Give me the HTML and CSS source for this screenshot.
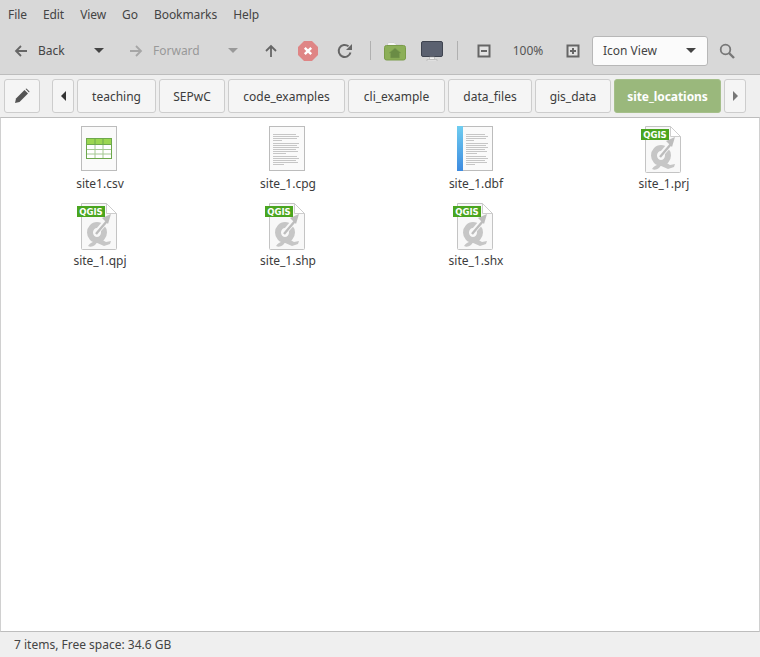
FILE: index.html
```html
<!DOCTYPE html>
<html lang="en">
<head>
<meta charset="utf-8">
<title>site_locations</title>
<link rel="stylesheet" href="styles.css">
</head>
<body>
<svg class="defs" width="0" height="0" aria-hidden="true">
  <defs>
    <linearGradient id="blueband" x1="0" y1="0" x2="0" y2="1">
      <stop offset="0" stop-color="#6fcdf0"/>
      <stop offset="1" stop-color="#3d8be0"/>
    </linearGradient>
    <symbol id="doclines" viewBox="0 0 48 48">
      <path d="M10 8.500h23M10 10.500h26M10 12.500h24M10 14.500h9M10 17.500h26M10 19.500h24M10 21.500h26M10 23.500h23M10 25.500h25M10 27.500h13M10 30.500h24M10 32.500h26M10 34.500h23M10 36.500h25M10 38.500h11" stroke="#c6c6c6" stroke-width="1" fill="none"/>
    </symbol>
    <symbol id="doclines-narrow" viewBox="0 0 48 48">
      <path d="M15 8.500h19M15 10.500h22M15 12.500h20M15 14.500h8M15 17.500h22M15 19.500h20M15 21.500h22M15 23.500h19M15 25.500h21M15 27.500h11M15 30.500h20M15 32.500h22M15 34.500h19M15 36.500h21M15 38.500h9" stroke="#c6c6c6" stroke-width="1" fill="none"/>
    </symbol>
    <symbol id="qgis" viewBox="0 0 48 48">
      <path d="M6.500.5H31.500l10 10V45.500a1 1 0 0 1-1 1H7.500a1 1 0 0 1-1-1Z" fill="#f8f8f8" stroke="#c4c4c4"/>
      <path d="M31.500 .5V10.500H41.500Z" fill="#fff" stroke="#cdcdcd"/>
      <ellipse cx="22" cy="29.500" rx="7" ry="7.500" fill="none" stroke="#c6c6c6" stroke-width="6"/>
      <path d="M24 35l7 4 5-1-1 3-6 2-9-4ZM13 43c2-3 5-5 9-4-1 3-5 6-9 4Z" fill="#c6c6c6"/>
      <path d="M21 30 33 16" stroke="#f8f8f8" stroke-width="5" fill="none"/>
      <path d="M21 31 32 18" stroke="#bdbdbd" stroke-width="2.400" fill="none"/>
      <path d="M36 11l-9 4 6 6Z" fill="#bdbdbd"/>
      <rect x="2" y="3" width="28" height="11" fill="#4aa51f"/>
      <text x="16" y="12" class="qgis-text">QGIS</text>
    </symbol>
  </defs>
</svg>
<div class="window">
  <nav class="menubar">
    <span class="menu-item">File</span>
    <span class="menu-item">Edit</span>
    <span class="menu-item">View</span>
    <span class="menu-item">Go</span>
    <span class="menu-item">Bookmarks</span>
    <span class="menu-item">Help</span>
  </nav>

  <div class="toolbar">
    <div class="tool-nav tool-back">
      <svg class="ic14" viewBox="0 0 14 14"><path d="M13 7H2M7 2 2 7l5 5" fill="none" stroke="#666" stroke-width="1.800"/></svg>
      <span class="tool-label">Back</span>
      <span class="caret"></span>
    </div>
    <div class="tool-nav tool-forward">
      <svg class="ic14" viewBox="0 0 14 14"><path d="M1 7h11M7 2l5 5-5 5" fill="none" stroke="#a6a6a6" stroke-width="1.800"/></svg>
      <span class="tool-label is-disabled">Forward</span>
      <span class="caret is-disabled-caret"></span>
    </div>
    <div class="tool-btn tool-first">
      <svg class="ic14" viewBox="0 0 14 14"><path d="M7 13V2M2 7l5-5 5 5" fill="none" stroke="#666" stroke-width="1.800"/></svg>
    </div>
    <div class="tool-btn">
      <svg class="ic20" viewBox="0 0 20 20"><path d="M6 0h8l6 6v8l-6 6H6l-6-6V6Z" fill="#df8585"/><path d="M6.800 6.800l6.400 6.400M13.200 6.800l-6.400 6.400" stroke="#fff" stroke-width="2.400"/></svg>
    </div>
    <div class="tool-btn">
      <svg class="ic16" viewBox="0 0 16 16"><path d="M13.500 9.500A6 6 0 1 1 11.500 3.300" fill="none" stroke="#666" stroke-width="2"/><path d="M15 1v6H9Z" fill="#666"/></svg>
    </div>
    <span class="sep sep-a"></span>
    <div class="tool-btn">
      <svg class="ic22" viewBox="0 0 22 20"><path d="M3.500 5V2.500L5 1.500h5L12 3.500h6V5Z" fill="#f6f6f6" stroke="#c4c4c4" stroke-width=".6"/><rect x=".5" y="4.500" width="21" height="14.500" rx="2" fill="#8caf58" stroke="#7b9c4a"/><path d="M11 7l6 5h-1.500v5h-9v-5H5Z" fill="#6a8c45" stroke="#7d9f52" stroke-width=".6"/></svg>
    </div>
    <div class="tool-btn">
      <svg class="ic22" viewBox="0 0 22 20"><rect x=".5" y=".5" width="21" height="15" rx="1.500" fill="#5b6170" stroke="#3f4450"/><path d="M8.500 16h5v2.500h-5Z" fill="#f4f4f4" stroke="#aaa" stroke-width=".6"/><path d="M6 18.500h10V20H6Z" fill="#f8f8f8" stroke="#aaa" stroke-width=".6"/></svg>
    </div>
    <span class="sep sep-b"></span>
    <div class="tool-btn">
      <svg class="ic14" viewBox="0 0 14 14"><rect x="1.500" y="1.500" width="11" height="11" fill="#e3e3e3" stroke="#666" stroke-width="2"/><path d="M4 7h6" stroke="#666" stroke-width="2"/></svg>
    </div>
    <span class="zoom-level">100%</span>
    <div class="tool-btn">
      <svg class="ic14" viewBox="0 0 14 14"><rect x="1.500" y="1.500" width="11" height="11" fill="#e3e3e3" stroke="#666" stroke-width="2"/><path d="M4 7h6M7 4v6" stroke="#666" stroke-width="2"/></svg>
    </div>
    <div class="view-combo">
      <span>Icon View</span>
      <span class="caret"></span>
    </div>
    <div class="tool-search">
      <svg class="ic16" viewBox="0 0 16 16"><circle cx="6.500" cy="6.500" r="4.800" fill="none" stroke="#777" stroke-width="1.800"/><path d="M10 10l5 5" stroke="#777" stroke-width="2.400"/></svg>
    </div>
  </div>

  <div class="pathbar">
    <div class="edit-btn">
      <svg class="ic16" viewBox="0 0 16 16"><path d="M1 15l1-4.500L10.500 2l3.500 3.500L5.500 14Z" fill="#555"/><path d="M11.500 1l1-.5 3 3-.5 1Z" fill="#555"/></svg>
    </div>
    <div class="crumbs">
      <div class="crumb"><span class="tri tri-left"></span></div>
      <div class="crumb">teaching</div>
      <div class="crumb">SEPwC</div>
      <div class="crumb">code_examples</div>
      <div class="crumb">cli_example</div>
      <div class="crumb">data_files</div>
      <div class="crumb">gis_data</div>
      <div class="crumb is-current">site_locations</div>
      <div class="crumb"><span class="tri tri-right"></span></div>
    </div>
  </div>

  <main class="files">
    <div class="file">
      <svg class="file-icon" viewBox="1 0 48 48">
        <rect x="6.500" y=".5" width="35" height="44" fill="#fafafa" stroke="#bcbcbc"/>
        <rect x="11.500" y="12.500" width="25" height="20" fill="#fff" stroke="#6da84c"/>
        <rect x="12" y="13" width="24" height="5" fill="#9bd650"/>
        <path d="M12 23.500h24M12 28h24M20 18v14M28 18v14" stroke="#a4c892" fill="none"/>
        <path d="M20 13v5M28 13v5M12 18.500h24" stroke="#6da84c" fill="none"/>
      </svg>
      <span class="file-name">site1.csv</span>
    </div>
    <div class="file">
      <svg class="file-icon" viewBox="1 0 48 48">
        <rect x="6.500" y=".5" width="35" height="44" fill="#fafafa" stroke="#bcbcbc"/>
        <use href="#doclines" width="48" height="48"/>
      </svg>
      <span class="file-name">site_1.cpg</span>
    </div>
    <div class="file">
      <svg class="file-icon" viewBox="1 0 48 48">
        <rect x="6.500" y=".5" width="35" height="44" fill="#fafafa" stroke="#bcbcbc"/>
        <rect x="6" y="0" width="6" height="45" fill="url(#blueband)"/>
        <use href="#doclines-narrow" width="48" height="48"/>
      </svg>
      <span class="file-name">site_1.dbf</span>
    </div>
    <div class="file">
      <svg class="file-icon" viewBox="1 0 48 48"><use href="#qgis" width="48" height="48"/></svg>
      <span class="file-name">site_1.prj</span>
    </div>
    <div class="file">
      <svg class="file-icon" viewBox="1 0 48 48"><use href="#qgis" width="48" height="48"/></svg>
      <span class="file-name">site_1.qpj</span>
    </div>
    <div class="file">
      <svg class="file-icon" viewBox="1 0 48 48"><use href="#qgis" width="48" height="48"/></svg>
      <span class="file-name">site_1.shp</span>
    </div>
    <div class="file">
      <svg class="file-icon" viewBox="1 0 48 48"><use href="#qgis" width="48" height="48"/></svg>
      <span class="file-name">site_1.shx</span>
    </div>
  </main>

  <footer class="statusbar">7 items, Free space: 34.6 GB</footer>
</div>
</body>
</html>
```

FILE: styles.css
```css
* { box-sizing: border-box; }

html, body {
  margin: 0;
  height: 100%;
}

body {
  font-family: "Noto Sans", sans-serif;
  font-size: 12px;
  color: #3c3c3c;
  background: #efefef;
}

.defs { position: absolute; }

.window {
  display: flex;
  flex-direction: column;
  height: 100vh;
  overflow: hidden;
}

/* Menu bar */
.menubar {
  display: flex;
  align-items: center;
  height: 29px;
  background: #d8d8d8;
  flex: none;
  letter-spacing: -0.07px;
}

.menu-item {
  padding: 0 8px;
  color: #444;
}

/* Toolbar */
.toolbar {
  display: flex;
  align-items: center;
  height: 46px;
  padding: 0 0 2px 6px;
  background: #d8d8d8;
  border-bottom: 1px solid #bdbdbd;
  flex: none;
  color: #444;
}

.tool-nav {
  display: flex;
  align-items: center;
  height: 30px;
}

.tool-back {
  width: 112px;
  padding: 0 14px 0 8px;
}

.tool-forward {
  width: 128px;
  padding: 0 8px 0 11px;
}

.tool-label {
  margin-left: 10px;
  margin-right: auto;
}

.tool-label.is-disabled { color: #999; }

.caret {
  width: 0;
  height: 0;
  border-left: 5px solid transparent;
  border-right: 5px solid transparent;
  border-top: 5px solid #444;
  flex: none;
}

.caret.is-disabled-caret { border-top-color: #999; }

.tool-btn {
  display: flex;
  align-items: center;
  justify-content: center;
  width: 37px;
  height: 30px;
  flex: none;
}

.tool-first { margin-left: 6px; }

.ic14 { width: 14px; height: 14px; }
.ic16 { width: 16px; height: 16px; }
.ic20 { width: 20px; height: 20px; }
.ic22 { width: 22px; height: 20px; }

.sep {
  width: 1px;
  height: 19px;
  background: #b0b0b0;
  flex: none;
}

.sep-a { margin: 0 5px 0 7px; }
.sep-b { margin: 0 7px; }

.zoom-level {
  width: 52px;
  text-align: center;
  color: #555;
}

.view-combo {
  display: flex;
  align-items: center;
  justify-content: space-between;
  width: 116px;
  height: 30px;
  margin-left: 1px;
  padding: 0 11px 0 10px;
  background: #fbfbfb;
  border: 1px solid #b7b7b7;
  border-radius: 3px;
}

.tool-search {
  display: flex;
  align-items: center;
  justify-content: center;
  width: 38px;
  height: 30px;
}

/* Path bar */
.pathbar {
  display: flex;
  align-items: center;
  height: 42px;
  padding: 0 4px;
  background: #efefef;
  flex: none;
}

.edit-btn {
  display: flex;
  align-items: center;
  justify-content: center;
  width: 36px;
  height: 34px;
  background: #f5f5f5;
  border: 1px solid #cdcdcd;
  border-radius: 3px;
  flex: none;
}

.crumbs {
  display: grid;
  grid-template-columns: 22px 79px 66px 117px 97px 84px 76px 107px 22px;
  gap: 3px;
  margin-left: 12px;
}

.crumb {
  display: flex;
  align-items: center;
  justify-content: center;
  height: 34px;
  background: #f5f5f5;
  border: 1px solid #cdcdcd;
  border-radius: 3px;
  color: #3c3c3c;
  white-space: nowrap;
}

.crumb.is-current {
  background: #9ab87c;
  border-color: #a5bf8a;
  color: #fff;
  font-weight: 700;
  letter-spacing: -0.07px;
}

.tri {
  width: 0;
  height: 0;
  border-top: 5px solid transparent;
  border-bottom: 5px solid transparent;
}

.tri-left { border-right: 5px solid #333; }
.tri-right { border-left: 5px solid #777; }

/* File grid */
.files {
  flex: 1;
  display: grid;
  grid-template-columns: repeat(4, 188px);
  grid-auto-rows: 77px;
  align-content: start;
  padding: 8px 0 0 5px;
  background: #fff;
  border: 1px solid #bdbdbd;
  border-left-color: #d0d0d0;
  border-right-color: #d0d0d0;
  min-height: 0;
}

.file {
  display: flex;
  flex-direction: column;
  align-items: center;
}

.file-icon {
  display: block;
  width: 48px;
  height: 48px;
  flex: none;
}

.file-name {
  line-height: 17px;
  margin-top: 1px;
  color: #3c3c3c;
  white-space: nowrap;
}

.qgis-text {
  font-family: "DejaVu Sans", sans-serif;
  font-size: 8.5px;
  font-weight: 700;
  fill: #fff;
  text-anchor: middle;
}

/* Status bar */
.statusbar {
  display: flex;
  align-items: center;
  height: 25px;
  padding-left: 14px;
  background: #efefef;
  color: #444;
  flex: none;
}
```
